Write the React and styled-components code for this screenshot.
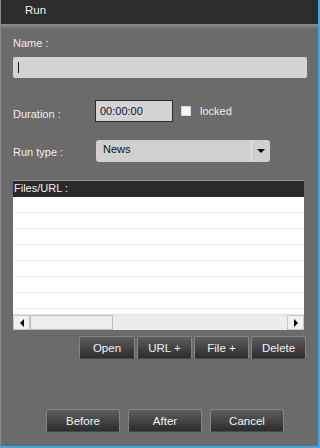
import React from "react";
import styled, { createGlobalStyle } from "styled-components";

const GlobalStyle = createGlobalStyle`
  html, body {
    margin: 0;
    padding: 0;
    background: #6b6b6b;
  }
  * {
    box-sizing: border-box;
  }
`;

const Window = styled.div`
  width: 320px;
  height: 448px;
  display: flex;
  flex-direction: column;
  border-left: 1px solid #8c8c8c;
  border-right: 2px solid #3ea8e2;
  border-bottom: 2px solid #3ea8e2;
  font-family: "Liberation Sans", Arial, sans-serif;
  font-size: 11px;
  color: #efefef;
`;

const TitleBar = styled.div`
  height: 24px;
  line-height: 21px;
  padding-left: 24px;
  background: #2c2c2c;
  color: #f2f2f2;
  font-size: 11.5px;
`;

const Body = styled.div`
  flex: 1;
  display: flex;
  flex-direction: column;
  padding: 12px 11px 14px 12px;
  background: linear-gradient(#8e8e8e, #6b6b6b 5px);
`;

const Label = styled.div`
  line-height: 14px;
  width: ${(p) => p.width || "auto"};
  flex-shrink: 0;
  padding-top: ${(p) => p.drop || 0}px;
`;

const TextBox = styled.div`
  margin-top: 7px;
  height: 21px;
  border-radius: 2px;
  background: #d4d4d4;
  display: flex;
  align-items: center;
  padding-left: 5px;
`;

const Caret = styled.span`
  width: 1px;
  height: 11px;
  background: #1a1a1a;
`;

const Row = styled.div`
  display: flex;
  align-items: center;
  margin-top: ${(p) => p.top}px;
`;

const TimeBox = styled.div`
  width: 78px;
  height: 22px;
  border: 1px solid #2a2a2a;
  background: #d3d3d3;
  color: #101030;
  padding: 3px 0 0 4px;
  line-height: 14px;
`;

const Check = styled.span`
  width: 10px;
  height: 10px;
  margin-left: 8px;
  background: #f7f7f7;
  border: 1px solid #d8d8d8;
`;

const CheckLabel = styled.span`
  margin-left: 9px;
  line-height: 14px;
`;

const Select = styled.div`
  width: 174px;
  height: 22px;
  margin-left: 1px;
  display: flex;
  border-radius: 3px;
  background: #d0d0d0;
  color: #111;
`;

const SelectValue = styled.div`
  flex: 1;
  padding: 2px 0 0 7px;
  line-height: 14px;
`;

const SelectButton = styled.div`
  width: 19px;
  border-left: 1px solid #e4e4e4;
  display: flex;
  align-items: center;
  justify-content: center;
`;

const List = styled.div`
  margin-top: 18px;
  margin-right: 3px;
  height: 150px;
  display: flex;
  flex-direction: column;
  border-top: 1px solid #9a9a9a;
`;

const ListHeader = styled.div`
  height: 16px;
  line-height: 15px;
  padding-left: 1px;
  background: #2a2a2a;
  color: #f0f0f0;
`;

const ListRows = styled.div`
  flex: 1;
  background: repeating-linear-gradient(
    to bottom,
    #ffffff 0 15px,
    #f1f1f1 15px 16px
  );
`;

const ScrollBar = styled.div`
  height: 16px;
  display: flex;
  background: repeating-conic-gradient(#f4f4f4 0 25%, #e4e4e4 0 50%) 0 0 / 2px 2px;
  border-top: 1px solid #e2e2e2;
`;

const ScrollArrow = styled.div`
  width: 17px;
  display: flex;
  align-items: center;
  justify-content: center;
  background: #f0f0f0;
  border: 1px solid #c6c6c6;
`;

const Thumb = styled.div`
  width: 83px;
  background: #ececec;
  border: 1px solid #bdbdbd;
`;

const Track = styled.div`
  flex: 1;
`;

const ButtonRow = styled.div`
  display: flex;
  gap: 2px;
  justify-content: flex-end;
  margin-top: 6px;
  margin-right: 1px;
`;

const BottomRow = styled.div`
  display: flex;
  gap: 8px;
  margin-top: auto;
  padding-left: 33px;
`;

const Button = styled.div`
  width: ${(p) => p.w}px;
  height: 23px;
  display: flex;
  align-items: center;
  justify-content: center;
  border: 1px solid #858585;
  border-bottom-color: #4a4a4a;
  border-radius: 2px;
  background: linear-gradient(#5e5e5e, #2c2c2c);
  color: #f2f2f2;
  font-size: 11.5px;
`;

const Arrow = ({ dir }) => {
  const pts = {
    left: "5,0 5,8 1,4",
    right: "1,0 1,8 5,4",
    down: "0,1 8,1 4,5",
  }[dir];
  return (
    <svg width={dir === "down" ? 8 : 6} height={dir === "down" ? 6 : 8}>
      <polygon points={pts} fill="#000" />
    </svg>
  );
};

const App = () => {
  return (
    <Window>
      <GlobalStyle />
      <TitleBar>Run</TitleBar>
      <Body>
        <Label>Name :</Label>
        <TextBox>
          <Caret />
        </TextBox>

        <Row top={22}>
          <Label width="82px" drop={5}>
            Duration :
          </Label>
          <TimeBox>00:00:00</TimeBox>
          <Check />
          <CheckLabel>locked</CheckLabel>
        </Row>

        <Row top={18}>
          <Label width="82px" drop={1}>
            Run type :
          </Label>
          <Select>
            <SelectValue>News</SelectValue>
            <SelectButton>
              <Arrow dir="down" />
            </SelectButton>
          </Select>
        </Row>

        <List>
          <ListHeader>Files/URL :</ListHeader>
          <ListRows />
          <ScrollBar>
            <ScrollArrow>
              <Arrow dir="left" />
            </ScrollArrow>
            <Thumb />
            <Track />
            <ScrollArrow>
              <Arrow dir="right" />
            </ScrollArrow>
          </ScrollBar>
        </List>

        <ButtonRow>
          <Button w={56}>Open</Button>
          <Button w={55}>URL +</Button>
          <Button w={55}>File +</Button>
          <Button w={55}>Delete</Button>
        </ButtonRow>

        <BottomRow>
          <Button w={74}>Before</Button>
          <Button w={74}>After</Button>
          <Button w={74}>Cancel</Button>
        </BottomRow>
      </Body>
    </Window>
  );
};

export default App;
